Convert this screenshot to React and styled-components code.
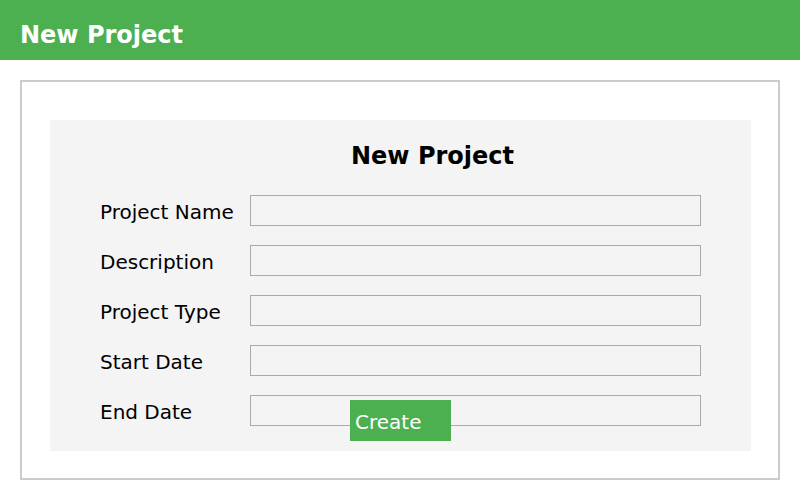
import styled, { createGlobalStyle } from "styled-components";

const GlobalStyle = createGlobalStyle`
  body {
    margin: 0;
    font-family: "DejaVu Sans", Verdana, sans-serif;
    background: #ffffff;
  }
`;

const fields = ["Project Name", "Description", "Project Type", "Start Date", "End Date"];

export default function App() {
  return (
    <>
      <GlobalStyle />
      <Header>New Project</Header>
      <Frame>
        <Panel>
          <Title>New Project</Title>
          {fields.map((label) => (
            <Row key={label}>
              <Label>{label}</Label>
              <Input type="text" />
            </Row>
          ))}
          <CreateButton>Create</CreateButton>
        </Panel>
      </Frame>
    </>
  );
}

const Header = styled.header`
  height: 49px;
  padding: 11px 0 0 20px;
  background: #4caf50;
  color: #ffffff;
  font-size: 24px;
  font-weight: 700;
  line-height: 49px;
`;

const Frame = styled.div`
  box-sizing: border-box;
  margin: 20px 20px 0;
  height: 400px;
  padding: 38px 27px 27px 28px;
  border: 2px solid #cccccc;
`;

const Panel = styled.div`
  box-sizing: border-box;
  height: 331px;
  padding: 22px 50px 0;
  background: #f4f4f4;
`;

const Title = styled.h2`
  margin: 0 0 25px;
  padding-left: 64px;
  font-size: 24px;
  font-weight: 700;
  text-align: center;
  color: #000000;
`;

const Row = styled.div`
  display: flex;
  align-items: flex-start;
  height: 31px;
  margin-bottom: 19px;
`;

const Label = styled.label`
  width: 150px;
  font-size: 20px;
  line-height: 35px;
  color: #000000;
  white-space: nowrap;
`;

const Input = styled.input`
  box-sizing: border-box;
  width: 451px;
  height: 31px;
  margin: 0;
  padding: 0 6px;
  border: 1px solid #aaaaaa;
  background: transparent;
  font-family: inherit;
  font-size: 16px;
`;

const CreateButton = styled.button`
  display: block;
  box-sizing: border-box;
  width: 101px;
  height: 41px;
  margin: -45px 0 0 250px;
  padding: 3px 5px 0;
  position: relative;
  border: none;
  background: #4caf50;
  color: #ffffff;
  font-family: inherit;
  font-size: 20px;
  text-align: left;
  cursor: pointer;
`;
